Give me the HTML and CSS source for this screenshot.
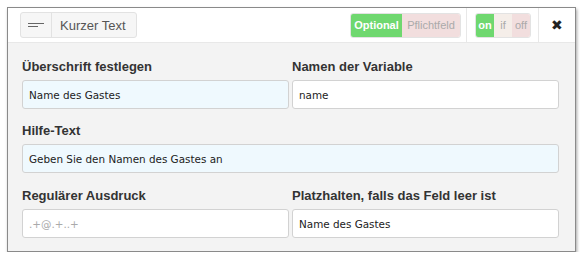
FILE: index.html
```html
<!DOCTYPE html>
<html>
<head>
<meta charset="utf-8">
<link rel="stylesheet" href="styles.css">
</head>
<body>
<div class="card">
  <div class="header">
    <div class="type-btn">
      <span class="type-icon"><svg width="16" height="6" viewBox="0 0 16 6"><rect x="0" y="1" width="16" height="1" fill="#666"/><rect x="0" y="4" width="10" height="1" fill="#666"/></svg></span>
      <span class="type-label">Kurzer Text</span>
    </div>
    <div class="spacer"></div>
    <div class="seg seg-req">
      <span class="s-green">Optional</span>
      <span class="s-pink">Pflichtfeld</span>
    </div>
    <div class="vsep sep1"></div>
    <div class="seg seg-on">
      <span class="s-green">on</span>
      <span class="s-beige">if</span>
      <span class="s-pink">off</span>
    </div>
    <div class="vsep sep2"></div>
    <div class="close">&#10006;</div>
  </div>
  <div class="body">
    <div class="field">
      <label>Überschrift festlegen</label>
      <div class="input blue">Name des Gastes</div>
    </div>
    <div class="field">
      <label>Namen der Variable</label>
      <div class="input">name</div>
    </div>
    <div class="field full">
      <label>Hilfe-Text</label>
      <div class="input blue">Geben Sie den Namen des Gastes an</div>
    </div>
    <div class="field last">
      <label>Regulärer Ausdruck</label>
      <div class="input placeholder">.+@.+..+</div>
    </div>
    <div class="field last">
      <label>Platzhalten, falls das Feld leer ist</label>
      <div class="input">Name des Gastes</div>
    </div>
  </div>
</div>
</body>
</html>
```

FILE: styles.css
```css
* { box-sizing: border-box; }
html, body { margin: 0; padding: 0; background: #fff; }
body { padding: 7px 0 0 7px; font-family: "Liberation Sans", Arial, sans-serif; }
.card {
  width: 569px;
  height: 245px;
  border: 1px solid #8a8a8a;
  background: #f3f3f3;
  box-shadow: 1px 2px 3px rgba(0,0,0,0.35);
}
.header {
  height: 35px;
  background: #fff;
  border-bottom: 1px solid #e8e8e8;
  display: flex;
  align-items: center;
  padding: 0 0 0 12px;
}
.type-btn {
  display: flex;
  height: 26px;
  border: 1px solid #e2e2e2;
  border-radius: 3px;
  background: #f6f6f6;
  align-items: stretch;
}
.type-icon {
  width: 31px;
  display: flex;
  align-items: center;
  justify-content: center;
  border-right: 1px solid #e2e2e2;
}
.type-icon svg { display: block; }
.type-label {
  padding: 0 10px 0 8px;
  font-size: 13px;
  color: #555;
  display: flex;
  align-items: center;
}
.spacer { flex: 1; }
.seg {
  display: flex;
  height: 25px;
  border: 1px solid #e3e3e3;
  border-radius: 3px;
  overflow: hidden;
  font-size: 11px;
}
.seg span { display: flex; align-items: center; justify-content: center; }
.s-green { background: #6fd86f; color: #fff; font-weight: bold; }
.s-pink { background: #f2dede; color: #aaa; }
.s-beige { background: #f5eee9; color: #aaa; }
.seg-req .s-green { width: 51px; }
.seg-req .s-pink { width: 58px; }
.seg-on .s-green { width: 18px; }
.seg-on .s-beige { width: 18px; }
.seg-on .s-pink { width: 18px; }
.vsep {
  width: 1px;
  align-self: stretch;
  background: #e8e8e8;
}
.sep1 { margin: 0 8px 0 5px; }
.sep2 { margin: 0 0 0 7px; }
.close {
  width: 36px;
  text-align: center;
  font-size: 14px;
  color: #222;
}
.body {
  display: grid;
  grid-template-columns: 267px 267px;
  column-gap: 3px;
  padding: 16px 15px 0 14px;
}
.field { display: flex; flex-direction: column; margin-bottom: 14px; }
.field.full { grid-column: 1 / span 2; margin-bottom: 15px; }
.field.last { margin-bottom: 0; }
label {
  font-size: 13px;
  font-weight: bold;
  color: #333;
  line-height: 16px;
  margin-bottom: 5px;
}
.input {
  height: 29px;
  border: 1px solid #d2d2d2;
  border-radius: 3px;
  background: #fff;
  font-family: "DejaVu Sans", sans-serif;
  font-size: 10.4px;
  color: #222;
  display: flex;
  align-items: center;
  padding-left: 6px;
}
.input.blue { background: #eff9fe; }
.input.placeholder { color: #aaa; }
```
